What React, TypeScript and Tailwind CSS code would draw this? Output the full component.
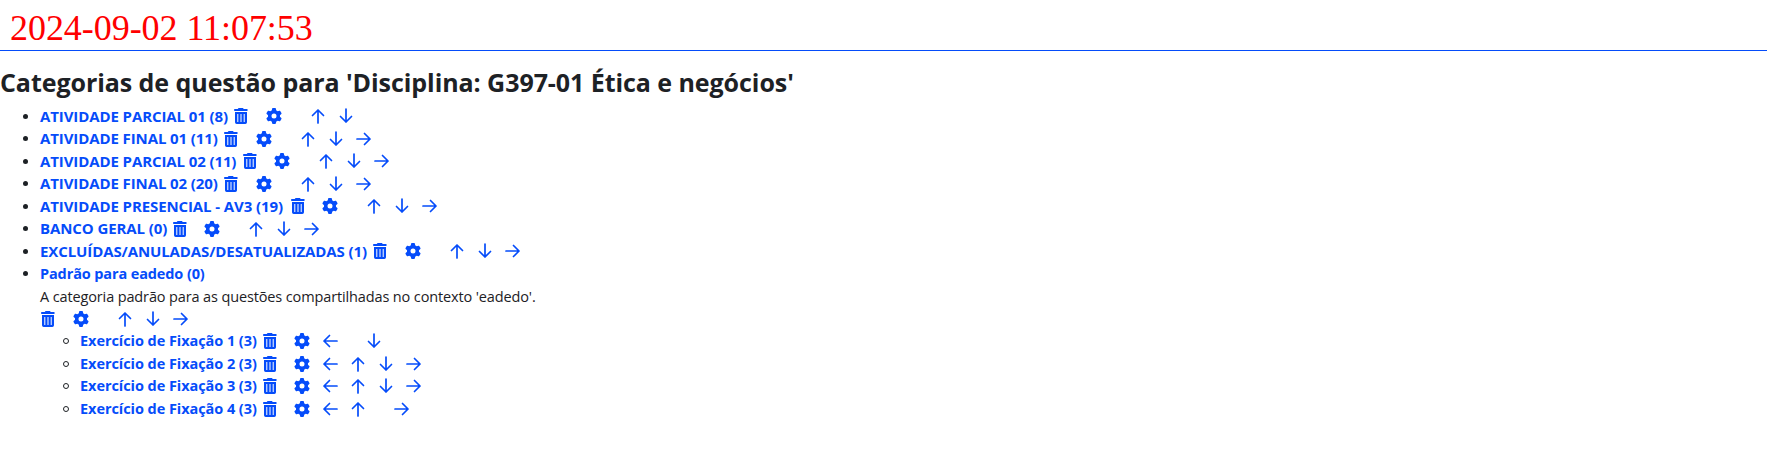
const BLUE = "text-[#054cfa]";

function Trash() {
  return (
    <svg viewBox="0 0 14 16" className="w-3.5 h-4 shrink-0" fill="currentColor">
      <path d="M4.6 0h4.300l.9 1H13.500v2H.2V1h3.500z" />
      <path fillRule="evenodd" d="M1 4h12v10.300a1.700 1.700 0 0 1-1.700 1.700H2.700A1.700 1.700 0 0 1 1 14.300zM3.300 6V14h1V6zM6.500 6V14h1V6zM9.700 6V14h1V6z" />
    </svg>
  );
}

function Gear() {
  return (
    <svg viewBox="0 0 512 512" className="w-4 h-4 shrink-0" fill="currentColor">
      <path d="M495.900 166.600c3.200 8.700 .5 18.400-6.400 24.600l-43.300 39.400c1.100 8.300 1.700 16.800 1.700 25.400s-.6 17.100-1.700 25.400l43.300 39.400c6.900 6.200 9.600 15.900 6.400 24.600c-4.400 11.900-9.700 23.300-15.800 34.300l-4.700 8.100c-6.600 11-14 21.400-22.100 31.200c-5.900 7.200-15.700 9.600-24.500 6.800l-55.700-17.700c-13.400 10.300-28.200 18.900-44 25.400l-12.500 57.100c-2 9.100-9 16.300-18.200 17.800c-13.800 2.300-28 3.500-42.500 3.500s-28.700-1.200-42.500-3.500c-9.200-1.500-16.200-8.700-18.200-17.800l-12.500-57.100c-15.800-6.500-30.600-15.100-44-25.400L83.100 425.900c-8.800 2.800-18.600 .3-24.500-6.800c-8.100-9.800-15.500-20.200-22.100-31.200l-4.700-8.100c-6.100-11-11.400-22.400-15.800-34.300c-3.200-8.700-.5-18.400 6.400-24.600l43.300-39.400C64.600 273.100 64 264.600 64 256s.6-17.100 1.700-25.400L22.400 191.200c-6.900-6.200-9.600-15.900-6.400-24.600c4.400-11.900 9.700-23.300 15.800-34.300l4.700-8.100c6.600-11 14-21.400 22.100-31.200c5.900-7.200 15.700-9.600 24.500-6.800l55.700 17.700c13.400-10.300 28.200-18.900 44-25.400l12.500-57.100c2-9.100 9-16.300 18.200-17.800C227.300 1.200 241.500 0 256 0s28.700 1.200 42.500 3.500c9.200 1.500 16.200 8.700 18.200 17.800l12.500 57.100c15.800 6.500 30.600 15.100 44 25.400l55.700-17.700c8.800-2.800 18.600-.3 24.500 6.800c8.100 9.800 15.500 20.200 22.100 31.200l4.700 8.100c6.100 11 11.400 22.400 15.800 34.300zM256 336a80 80 0 1 0 0-160 80 80 0 1 0 0 160z" />
    </svg>
  );
}

const arrows = {
  L: "M15 8H2M7.500 2.500L2 8L7.500 13.500",
  U: "M8 15V2M2.500 7.500L8 2L13.500 7.500",
  D: "M8 1V14M2.500 8.500L8 14L13.500 8.500",
  R: "M1 8H14M8.500 2.500L14 8L8.500 13.500",
};

function Arrow({ dir }: { dir: keyof typeof arrows }) {
  return (
    <svg
      viewBox="0 0 16 16"
      className="w-4 h-4 mx-1.5 shrink-0"
      fill="none"
      stroke="currentColor"
      strokeWidth="1.7"
      strokeLinecap="round"
      strokeLinejoin="round"
    >
      <path d={arrows[dir]} />
    </svg>
  );
}

function Actions({ moves }: { moves: string }) {
  return (
    <span className="flex h-4 items-center">
      <Trash />
      <span className="w-[17.5px]" />
      <Gear />
      <span className="w-1.5" />
      {moves.split("").map((m, i) =>
        m === "-" ? <span key={i} className="w-4" /> : <Arrow key={i} dir={m as keyof typeof arrows} />
      )}
    </span>
  );
}

type Category = { name: string; width: string; moves: string };

const categories: Category[] = [
  { name: "ATIVIDADE PARCIAL 01 (8)", width: "w-[194px]", moves: "-UD" },
  { name: "ATIVIDADE FINAL 01 (11)", width: "w-[184px]", moves: "-UDR" },
  { name: "ATIVIDADE PARCIAL 02 (11)", width: "w-[202.5px]", moves: "-UDR" },
  { name: "ATIVIDADE FINAL 02 (20)", width: "w-[184px]", moves: "-UDR" },
  { name: "ATIVIDADE PRESENCIAL - AV3 (19)", width: "w-[250.5px]", moves: "-UDR" },
  { name: "BANCO GERAL (0)", width: "w-[132.5px]", moves: "-UDR" },
  { name: "EXCLUÍDAS/ANULADAS/DESATUALIZADAS (1)", width: "w-[333px]", moves: "-UDR" },
];

const exercises: Category[] = ["L-D", "LUDR", "LUDR", "LU-R"].map((moves, i) => ({
  name: `Exercício de Fixação ${i + 1} (3)`,
  width: "w-[182.5px]",
  moves,
}));

function Row({ item, nested }: { item: Category; nested?: boolean }) {
  return (
    <li className="flex h-[22.5px] items-center">
      <span
        className={
          nested
            ? "ml-[23px] mr-[11px] h-1.5 w-1.5 rounded-full border border-[#1d2125]"
            : "ml-[23px] mr-3 h-[5px] w-[5px] rounded-full bg-[#1d2125]"
        }
      />
      <span className={`flex items-center ${BLUE}`}>
        <a
          href="#"
          className={`whitespace-nowrap font-bold ${item.width} ${
            nested ? "pt-px text-[14.5px] tracking-[-0.06px]" : "tracking-[-0.1px]"
          }`}
        >
          {item.name}
        </a>
        <Actions moves={item.moves} />
      </span>
    </li>
  );
}

export default function App() {
  return (
    <div className="h-[452px] overflow-hidden bg-white font-['Open_Sans',sans-serif] text-[15px] leading-[22.5px] text-[#1d2125]">
      <div className="h-[51px] border-b border-[#054cfa] pl-2.5 pt-2 font-['Liberation_Serif',serif] text-[36px] leading-[41px] tracking-[-0.05px] text-[#ff0000]">
        2024-09-02 11:07:53
      </div>
      <h2 className="mt-[15px] h-[38.800px] whitespace-nowrap text-[25px] font-bold leading-8 tracking-[-0.06px]">
        Categorias de questão para 'Disciplina: G397-01 Ética e negócios'
      </h2>
      <ul>
        {categories.map((c) => <Row key={c.name} item={c} />)}
        <li>
          <div className="flex h-[22.5px] items-center">
            <span className="ml-[23px] mr-3 h-[5px] w-[5px] rounded-full bg-[#1d2125]" />
            <a href="#" className={`pt-px text-[14.5px] font-bold tracking-[-0.12px] ${BLUE}`}>Padrão para eadedo (0)</a>
          </div>
          <div className="pl-10">
            <p className="h-[22.5px] pt-px text-[14.5px] tracking-[-0.13px]">
              A categoria padrão para as questões compartilhadas no contexto 'eadedo'.
            </p>
            <div className={`flex h-[22.5px] items-center pl-[1px] ${BLUE}`}><Actions moves="-UDR" /></div>
            <ul>{exercises.map((c) => <Row key={c.name} item={c} nested />)}</ul>
          </div>
        </li>
      </ul>
    </div>
  );
}
